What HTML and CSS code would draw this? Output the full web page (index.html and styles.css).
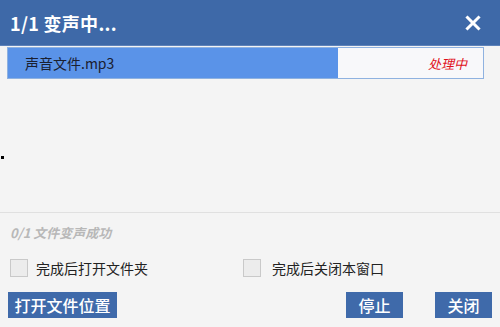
FILE: index.html
```html
<!DOCTYPE html>
<html lang="zh">
<head>
<meta charset="utf-8">
<link rel="stylesheet" href="styles.css">
</head>
<body>
<div class="window">
  <div class="titlebar">
    <span class="title">1/1 变声中...</span>
    <svg class="close" width="16" height="16" viewBox="0 0 16 16"><path d="M2.5 2.5 L13.5 13.5 M13.5 2.5 L2.5 13.5" stroke="#fff" stroke-width="3" stroke-linecap="square"/></svg>
  </div>
  <div class="body">
    <div class="progress">
      <div class="fill" style="width:69.5%"></div>
      <span class="fname">声音文件.mp3</span>
      <span class="state">处理中</span>
    </div>
    <div class="log"><div class="dot"></div></div>
  </div>
  <div class="footer">
    <div class="status">0/1 文件变声成功</div>
    <div class="checks">
      <label class="check"><span class="box"></span>完成后打开文件夹</label>
      <label class="check second"><span class="box"></span>完成后关闭本窗口</label>
    </div>
    <div class="buttons">
      <button class="btn wide">打开文件位置</button>
      <span class="spacer"></span>
      <button class="btn">停止</button>
      <button class="btn">关闭</button>
    </div>
  </div>
</div>
</body>
</html>
```
FILE: styles.css
```css
html, body {
  margin: 0;
  padding: 0;
  width: 500px;
  height: 327px;
  overflow: hidden;
  background: #f4f4f4;
  font-family: "Noto Sans CJK SC", "Noto Sans", sans-serif;
}
.window {
  display: flex;
  flex-direction: column;
  height: 327px;
}
.titlebar {
  height: 46px;
  box-sizing: border-box;
  background: #3e69a8;
  display: flex;
  align-items: center;
  justify-content: space-between;
  padding: 0 19px 0 10px;
  border-bottom: 1px solid #5d82ba;
}
.title {
  color: #fff;
  font-weight: bold;
  font-size: 18px;
  letter-spacing: 0.3px;
}
.close { display: block; }
.body {
  flex: 1;
  display: flex;
  flex-direction: column;
  padding: 1px 16px 0 7px;
  border-bottom: 1px solid #e0e0e0;
}
.progress {
  position: relative;
  height: 32px;
  box-sizing: border-box;
  border: 1px solid #8fb2e0;
  background: #f8f8fa;
  display: flex;
  align-items: center;
  justify-content: space-between;
  padding: 0 16px 0 17px;
}
.fill {
  position: absolute;
  left: 0;
  top: 0;
  bottom: 0;
  background: #5a93e8;
}
.fname {
  position: relative;
  font-size: 14px;
  color: #1a2030;
}
.state {
  position: relative;
  font-size: 13px;
  color: #e0101a;
  font-style: italic;
}
.log {
  flex: 1;
  margin-left: -6px;
  padding-top: 77px;
}
.dot {
  width: 3px;
  height: 3px;
  background: #000;
}
.footer {
  height: 114px;
  box-sizing: border-box;
  padding: 9px 8px 0 8px;
  display: flex;
  flex-direction: column;
}
.status {
  font-size: 13px;
  font-style: italic;
  font-weight: bold;
  color: #b8b8b8;
  padding-left: 2px;
  height: 22px;
  line-height: 22px;
}
.checks {
  display: flex;
  margin-top: 14px;
  height: 20px;
  align-items: center;
  padding-left: 2px;
}
.check {
  display: flex;
  align-items: center;
  font-size: 14px;
  color: #222;
}
.check.second { margin-left: 95px; }
.box {
  width: 16px;
  height: 16px;
  border: 1px solid #c9c9c9;
  background: #ececec;
  margin-right: 8px;
}
.check.second .box { margin-right: 11px; }
.buttons {
  display: flex;
  margin-top: 14px;
}
.spacer { flex: 1; }
.btn {
  height: 26px;
  border: none;
  background: #3f6aaa;
  color: #fff;
  font-family: "Noto Sans CJK SC", sans-serif;
  font-size: 16px;
  font-weight: 500;
  padding: 0;
  width: 57px;
  margin-left: 32px;
  line-height: 26px;
}
.btn.wide {
  width: 109px;
  margin-left: 0;
}
```
